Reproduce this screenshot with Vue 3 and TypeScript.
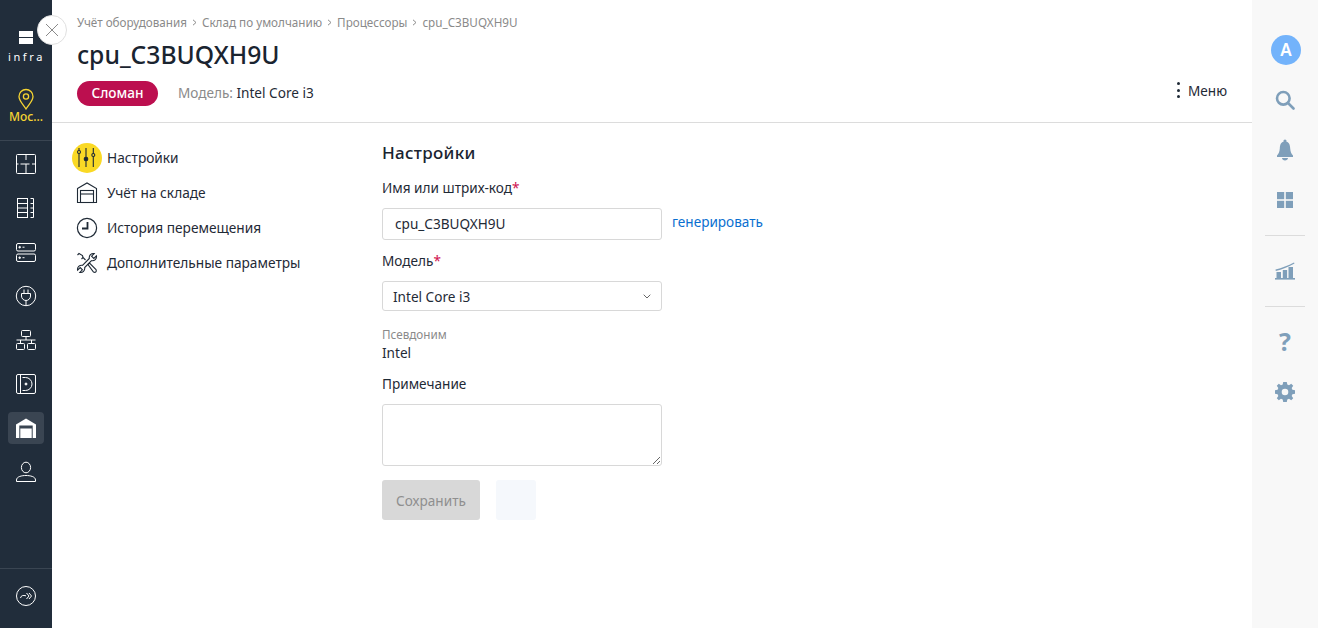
<script setup lang="ts">
const crumbs: string[] = ['Учёт оборудования', 'Склад по умолчанию', 'Процессоры', 'cpu_C3BUQXH9U']
</script>

<template>
  <div class="app">
    <aside class="left">
      <div class="logo">
        <div class="logo-bars"><i></i><i></i></div>
        <div class="logo-text">infra</div>
      </div>
      <div class="loc">
        <svg width="18" height="22" viewBox="0 0 18 22" fill="none" stroke="#f5d432" stroke-width="1.3">
          <path d="M9 21 C6 16 2 13 2 8.5 A7 7 0 0 1 16 8.5 C16 13 12 16 9 21Z" />
          <circle cx="9" cy="8.5" r="2.6" />
        </svg>
        <span>Мос...</span>
      </div>
      <nav class="lnav">
        <div class="lbtn">
          <svg width="22" height="22" viewBox="0 0 22 22" fill="none" stroke="#fff" stroke-width="1">
            <rect x="1.5" y="1.5" width="19" height="19" rx="1" />
            <path d="M11 1.500V7M11 11V20.500M5.500 11H14.500M17 11H20.500M1.500 11H3.500" />
          </svg>
        </div>
        <div class="lbtn">
          <svg width="18" height="22" viewBox="0 0 18 22" fill="none" stroke="#fff" stroke-width="1">
            <rect x="0.5" y="1.5" width="10" height="19" />
            <path d="M0.5 6.5H10.5M0.5 11H10.5M0.5 15.5H10.5M13.5 1.5H16.5V20.5H13.5M13.5 6.5H16.5M13.5 11H16.5M13.5 15.5H16.5" />
          </svg>
        </div>
        <div class="lbtn">
          <svg width="22" height="22" viewBox="0 0 22 22" fill="none" stroke="#fff" stroke-width="1">
            <rect x="1.5" y="2.5" width="19" height="7.5" rx="1.5" />
            <rect x="1.5" y="13" width="19" height="7.5" rx="1.5" />
            <circle cx="4.7" cy="6.2" r="0.8" fill="#fff" />
            <circle cx="4.7" cy="16.7" r="0.8" fill="#fff" />
            <path d="M7.5 6.2H9.5M7.5 16.7H9.5" />
          </svg>
        </div>
        <div class="lbtn">
          <svg width="22" height="22" viewBox="0 0 22 22" fill="none" stroke="#fff" stroke-width="1">
            <circle cx="11" cy="11" r="9.7" />
            <path d="M6.5 8.5H15.5V11A4.5 4.5 0 0 1 6.5 11ZM9 4.500V8.500M13 4.500V8.500M11 15.500V20.500" />
          </svg>
        </div>
        <div class="lbtn">
          <svg width="22" height="22" viewBox="0 0 22 22" fill="none" stroke="#fff" stroke-width="1">
            <rect x="6.5" y="1.5" width="9" height="6" rx="1" />
            <rect x="1.5" y="14.5" width="8" height="6" rx="1" />
            <rect x="12.5" y="14.5" width="8" height="6" rx="1" />
            <path d="M11 7.500V11M1.500 11H20.500M5.500 11V14.500M16.500 11V14.500" />
          </svg>
        </div>
        <div class="lbtn">
          <svg width="22" height="22" viewBox="0 0 22 22" fill="none" stroke="#fff" stroke-width="1">
            <rect x="1.5" y="1.5" width="19" height="19" rx="1.5" />
            <path d="M5.500 1.500V20.500M7.500 4.500H10.500A6.500 6.500 0 0 1 10.500 17.500H7.500" />
            <circle cx="11" cy="11" r="1" fill="#fff" />
          </svg>
        </div>
        <div class="lbtn active">
          <svg width="20" height="20" viewBox="0 0 20 20">
            <path d="M10 0.500L20 6.500V20H0V6.500Z" fill="#fff" />
            <rect x="3.3" y="7.500" width="13.400" height="12.500" fill="#3a4552" />
            <rect x="4.300" y="10.500" width="11.400" height="9.500" fill="#fff" />
          </svg>
        </div>
        <div class="lbtn">
          <svg width="22" height="22" viewBox="0 0 22 22" fill="none" stroke="#fff" stroke-width="1">
            <ellipse cx="11" cy="6.5" rx="4.6" ry="5.3" />
            <path d="M1.5 20.5V19C1.5 15.5 7 14.5 11 14.5S20.5 15.5 20.5 19V20.5Z" />
          </svg>
        </div>
      </nav>
      <div class="lfoot">
        <svg width="20" height="20" viewBox="0 0 20 20" fill="none" stroke="#fff" stroke-width="1">
          <circle cx="10" cy="10" r="9.5" />
          <path d="M4.500 12C5 9.500 7 9 10 9.800M10.500 7L13 10L10.500 13M13 7L15.500 10L13 13" />
        </svg>
      </div>
    </aside>

    <button class="close" type="button" aria-label="close">
      <svg width="14" height="14" viewBox="0 0 14 14" fill="none" stroke="#8a8a8a" stroke-width="1">
        <path d="M1 1L13 13M13 1L1 13" />
      </svg>
    </button>

    <main class="main">
      <header class="head">
        <div class="crumbs">
          <template v-for="(c, i) in crumbs" :key="c">
            <span>{{ c }}</span>
            <svg v-if="i < crumbs.length - 1" class="sep" width="5" height="7" viewBox="0 0 5 7" fill="none" stroke="#8a8a8a" stroke-width="1">
              <path d="M1 0.800L4 3.500L1 6.200" />
            </svg>
          </template>
        </div>
        <h1>cpu_C3BUQXH9U</h1>
        <div class="meta">
          <span class="pill">Сломан</span>
          <span class="model"><span class="muted">Модель:</span> Intel Core i3</span>
          <span class="menu">
            <span class="dots"><i></i><i></i><i></i></span>
            Меню
          </span>
        </div>
      </header>

      <div class="body">
        <ul class="tabs">
          <li>
            <span class="tabicon on">
              <svg width="22" height="24" viewBox="0 0 22 24" fill="none" stroke="#1f2a36" stroke-width="1.1">
                <path d="M3 2V21M10 2V21M17.300 2V21" />
                <circle cx="3" cy="6" r="1.500" fill="#fad925" />
                <circle cx="10" cy="13" r="1.800" fill="#1f2a36" />
                <circle cx="17.300" cy="9" r="1.500" fill="#fad925" />
              </svg>
            </span>
            Настройки
          </li>
          <li>
            <span class="tabicon">
              <svg width="22" height="22" viewBox="0 0 22 22" fill="none" stroke="#1f2a36" stroke-width="1.1">
                <path d="M1.500 6.500L11 1L20.500 6.500V20.500H1.500Z" />
                <rect x="4.500" y="8.500" width="13" height="12" />
                <path d="M4.500 12H17.500" />
              </svg>
            </span>
            Учёт на складе
          </li>
          <li>
            <span class="tabicon">
              <svg width="22" height="22" viewBox="0 0 22 22" fill="none" stroke="#1f2a36" stroke-width="1.2">
                <circle cx="11" cy="11" r="9.600" />
                <path d="M11.500 5V11.500H6" stroke-width="1.800" />
              </svg>
            </span>
            История перемещения
          </li>
          <li>
            <span class="tabicon">
              <svg width="22" height="22" viewBox="0 0 22 22" fill="none" stroke="#1f2a36" stroke-width="1.1">
                <path d="M13.300 6.500C12.800 3.500 15.300 1 18.200 1.600L15.600 4.200L17.800 6.400L20.400 3.800C21 6.700 18.500 9.200 15.500 8.700L8.700 15.500C9.200 18.500 6.700 21 3.800 20.400L6.400 17.800L4.200 15.600L1.600 18.200C1 15.300 3.500 12.800 6.500 13.300Z" />
                <path d="M1.500 3L3 1.500L6.500 3.500L7 5.500L9.500 8M5.500 7L7 5.500" />
                <path d="M12 12.500L13.500 11L20 17.500C21 19.500 19.500 21 17.500 20Z" />
              </svg>
            </span>
            Дополнительные параметры
          </li>
        </ul>

        <form class="form" @submit.prevent>
          <h2>Настройки</h2>
          <label class="lbl">Имя или штрих-код<em>*</em></label>
          <div class="row">
            <div class="input">cpu_C3BUQXH9U</div>
            <a class="gen">генерировать</a>
          </div>
          <label class="lbl l2">Модель<em>*</em></label>
          <div class="select">
            <span>Intel Core i3</span>
            <svg width="8" height="5" viewBox="0 0 8 5" fill="none" stroke="#666" stroke-width="1">
              <path d="M0.700 0.700L4 4L7.300 0.700" />
            </svg>
          </div>
          <div class="alias-l">Псевдоним</div>
          <div class="alias-v">Intel</div>
          <label class="lbl l3">Примечание</label>
          <textarea class="area"></textarea>
          <div class="btns">
            <button class="save" type="button" disabled>Сохранить</button>
            <span class="ghost"></span>
          </div>
        </form>
      </div>
    </main>

    <aside class="right">
      <div class="avatar">A</div>
      <div class="rbtn first">
        <svg width="20" height="20" viewBox="0 0 20 20" fill="none" stroke="#7f9fba" stroke-width="2.6">
          <circle cx="8.3" cy="8.3" r="6.3" />
          <path d="M13 13L18.500 18.500" stroke-linecap="round" />
        </svg>
      </div>
      <div class="rbtn">
        <svg width="18" height="22" viewBox="0 0 18 22" fill="#7f9fba">
          <circle cx="9" cy="2" r="1.600" />
          <path d="M9 2.500C13 2.500 14 5.500 14.200 9.500C14.400 13 15.500 15 17 16.500V18H1V16.500C2.500 15 3.600 13 3.800 9.500C4 5.500 5 2.500 9 2.500Z" />
          <path d="M6 19H12C12 20.500 10.500 21.500 9 21.500S6 20.500 6 19Z" />
        </svg>
      </div>
      <div class="rbtn">
        <svg width="16" height="16" viewBox="0 0 16 16" fill="#7f9fba">
          <rect x="0" y="0" width="7.200" height="7.200" />
          <rect x="8.800" y="0" width="7.200" height="7.200" />
          <rect x="0" y="8.800" width="7.200" height="7.200" />
          <rect x="8.800" y="8.800" width="7.200" height="7.200" />
        </svg>
      </div>
      <hr class="rule" />
      <div class="rbtn chart">
        <svg width="20" height="18" viewBox="0 0 20 18" fill="#7f9fba">
          <path d="M0.500 7.500C7 6 13 3.500 19 0.500L19.500 1.500C13 5 7 7.500 0.800 9Z" />
          <rect x="1.500" y="10" width="4.500" height="6.500" />
          <rect x="7.800" y="8" width="4.300" height="8.500" />
          <rect x="13.500" y="5" width="4.500" height="11.500" />
          <rect x="0" y="16" width="20" height="1.600" />
        </svg>
      </div>
      <hr class="rule r2" />
      <div class="rbtn q">?</div>
      <div class="rbtn">
        <svg width="20" height="20" viewBox="0 0 20 20" fill="#7f9fba">
          <path fill-rule="evenodd" d="M8.200 0H11.800L12.300 2.600L14 3.300L16.200 1.800L18.200 3.800L16.700 6L17.400 7.700L20 8.200V11.800L17.400 12.300L16.700 14L18.200 16.200L16.200 18.200L14 16.700L12.300 17.400L11.800 20H8.200L7.700 17.400L6 16.700L3.800 18.200L1.800 16.200L3.300 14L2.600 12.300L0 11.800V8.200L2.600 7.700L3.300 6L1.800 3.800L3.800 1.800L6 3.300L7.700 2.600ZM10 6.700A3.300 3.300 0 1 0 10 13.300A3.300 3.300 0 1 0 10 6.700Z" />
        </svg>
      </div>
    </aside>
  </div>
</template>

<style>
html, body { margin: 0; background: #fff; }
</style>

<style scoped>
.app {
  position: relative;
  display: flex;
  width: 1318px;
  height: 628px;
  overflow: hidden;
  font-family: "Noto Sans", "Open Sans", sans-serif;
  font-size: 13.6px;
  color: #1f2a36;
}
.left {
  width: 52px;
  flex: none;
  background: #212d3b;
  display: flex;
  flex-direction: column;
  align-items: center;
  color: #fff;
}
.logo { height: 67px; padding-top: 31px; box-sizing: border-box; display: flex; flex-direction: column; align-items: center; }
.logo-bars { display: flex; flex-direction: column; gap: 1px; }
.logo-bars i { display: block; width: 14px; height: 6px; background: #fff; }
.logo-text { font-size: 11px; letter-spacing: 2.6px; line-height: 12px; margin-top: 7px; margin-right: -1px; }
.loc { height: 74px; padding-top: 21px; box-sizing: border-box; display: flex; flex-direction: column; align-items: center; border-bottom: 1px solid #3a4552; width: 100%; color: #f5d432; font-size: 12px; font-weight: 500; line-height: 14px; }
.lnav { display: flex; flex-direction: column; align-items: center; padding-top: 7px; gap: 12px; }
.lbtn { width: 36px; height: 32px; display: flex; align-items: center; justify-content: center; border-radius: 4px; }
.lbtn.active { background: #3a4552; }
.lfoot { margin-top: auto; width: 100%; height: 60px; border-top: 1px solid #3a4552; display: flex; align-items: center; justify-content: center; box-sizing: border-box; padding-bottom: 5px; }

.close {
  position: absolute;
  left: 37px;
  top: 15px;
  width: 30px;
  height: 30px;
  padding: 0;
  box-sizing: border-box;
  background: #fff;
  border: 1px solid #e0e0e0;
  border-radius: 50%;
  display: flex;
  align-items: center;
  justify-content: center;
}

.main { flex: 1; min-width: 0; display: flex; flex-direction: column; }
.head { height: 123px; box-sizing: border-box; border-bottom: 1px solid #dcdcdc; padding: 14px 25px 0; }
.crumbs { display: flex; align-items: center; font-size: 11.7px; line-height: 16px; color: #8a8a8a; }
.sep { margin: 0 5px; }
h1 { margin: 9px 0 0; font-size: 24.7px; line-height: 32px; font-weight: 500; color: #1a2430; }
.meta { display: flex; align-items: center; margin-top: 10px; height: 25px; }
.pill { width: 81px; height: 25px; border-radius: 13px; background: #bc0f4f; color: #fff; font-weight: 500; line-height: 24px; text-align: center; }
.model { margin-left: 20px; margin-top: -3px; }
.muted { color: #8a8a8a; }
.menu { margin-left: auto; display: flex; align-items: center; gap: 8px; margin-top: -7px; }
.dots { display: flex; flex-direction: column; gap: 3.5px; }
.dots i { display: block; width: 3px; height: 3px; border-radius: 50%; background: #1f2a36; }

.body { flex: 1; display: flex; }
.tabs { list-style: none; margin: 0; padding: 17px 0 0 20px; width: 330px; box-sizing: border-box; font-size: 13.7px; }
.tabs li { display: flex; align-items: center; height: 35px; }
.tabicon { width: 30px; height: 30px; margin-right: 5px; display: flex; align-items: center; justify-content: center; border-radius: 50%; }
.tabicon.on { background: #fad925; }

.form { display: flex; flex-direction: column; align-items: flex-start; padding-top: 18px; }
h2 { margin: 0; font-size: 17px; letter-spacing: 0.3px; line-height: 24px; font-weight: 500; color: #1a2430; }
.lbl { line-height: 20px; margin-top: 13px; }
.lbl em { color: #d0104f; font-style: normal; }
.row { display: flex; align-items: center; margin-top: 10px; }
.input { width: 280px; height: 32px; box-sizing: border-box; border: 1px solid #d8d8d8; border-radius: 3px; padding: 0 12px; line-height: 30px; }
.gen { margin-left: 10px; color: #0a6fd0; margin-top: -6px; }
.l2 { margin-top: 11px; }
.select { width: 280px; height: 30px; margin-top: 10px; box-sizing: border-box; border: 1px solid #d8d8d8; border-radius: 3px; padding: 0 10px; display: flex; align-items: center; justify-content: space-between; }
.alias-l { font-size: 11.7px; line-height: 14px; color: #8a8a8a; margin-top: 16px; }
.alias-v { line-height: 20px; margin-top: 2px; }
.l3 { margin-top: 11px; }
.area { display: block; width: 280px; height: 62px; margin-top: 10px; box-sizing: border-box; border: 1px solid #d8d8d8; border-radius: 3px; outline: none; }
.btns { display: flex; gap: 16px; margin-top: 14px; }
.save { width: 98px; height: 40px; border: none; border-radius: 3px; background: #d8d8d8; color: #8f8f8f; font: inherit; padding: 0; }
.ghost { width: 40px; height: 40px; border-radius: 3px; background: #f5f8fc; }

.right { width: 66px; flex: none; background: #f8f8f8; display: flex; flex-direction: column; align-items: center; padding-top: 35px; box-sizing: border-box; }
.avatar { width: 30px; height: 30px; border-radius: 50%; background: #73b3fb; color: #fff; font-size: 17px; font-weight: 600; line-height: 30px; text-align: center; margin-left: 2px; }
.rbtn { height: 50px; width: 100%; display: flex; align-items: center; justify-content: center; }
.rbtn.first { margin-top: 10px; }
.rule { width: 40px; border: none; border-top: 1px solid #dcdcdc; margin: 10px 0; }
.q { font-size: 25px; font-weight: 700; color: #7f9fba; font-family: "Open Sans", sans-serif; padding-bottom: 2px; box-sizing: border-box; }
</style>
